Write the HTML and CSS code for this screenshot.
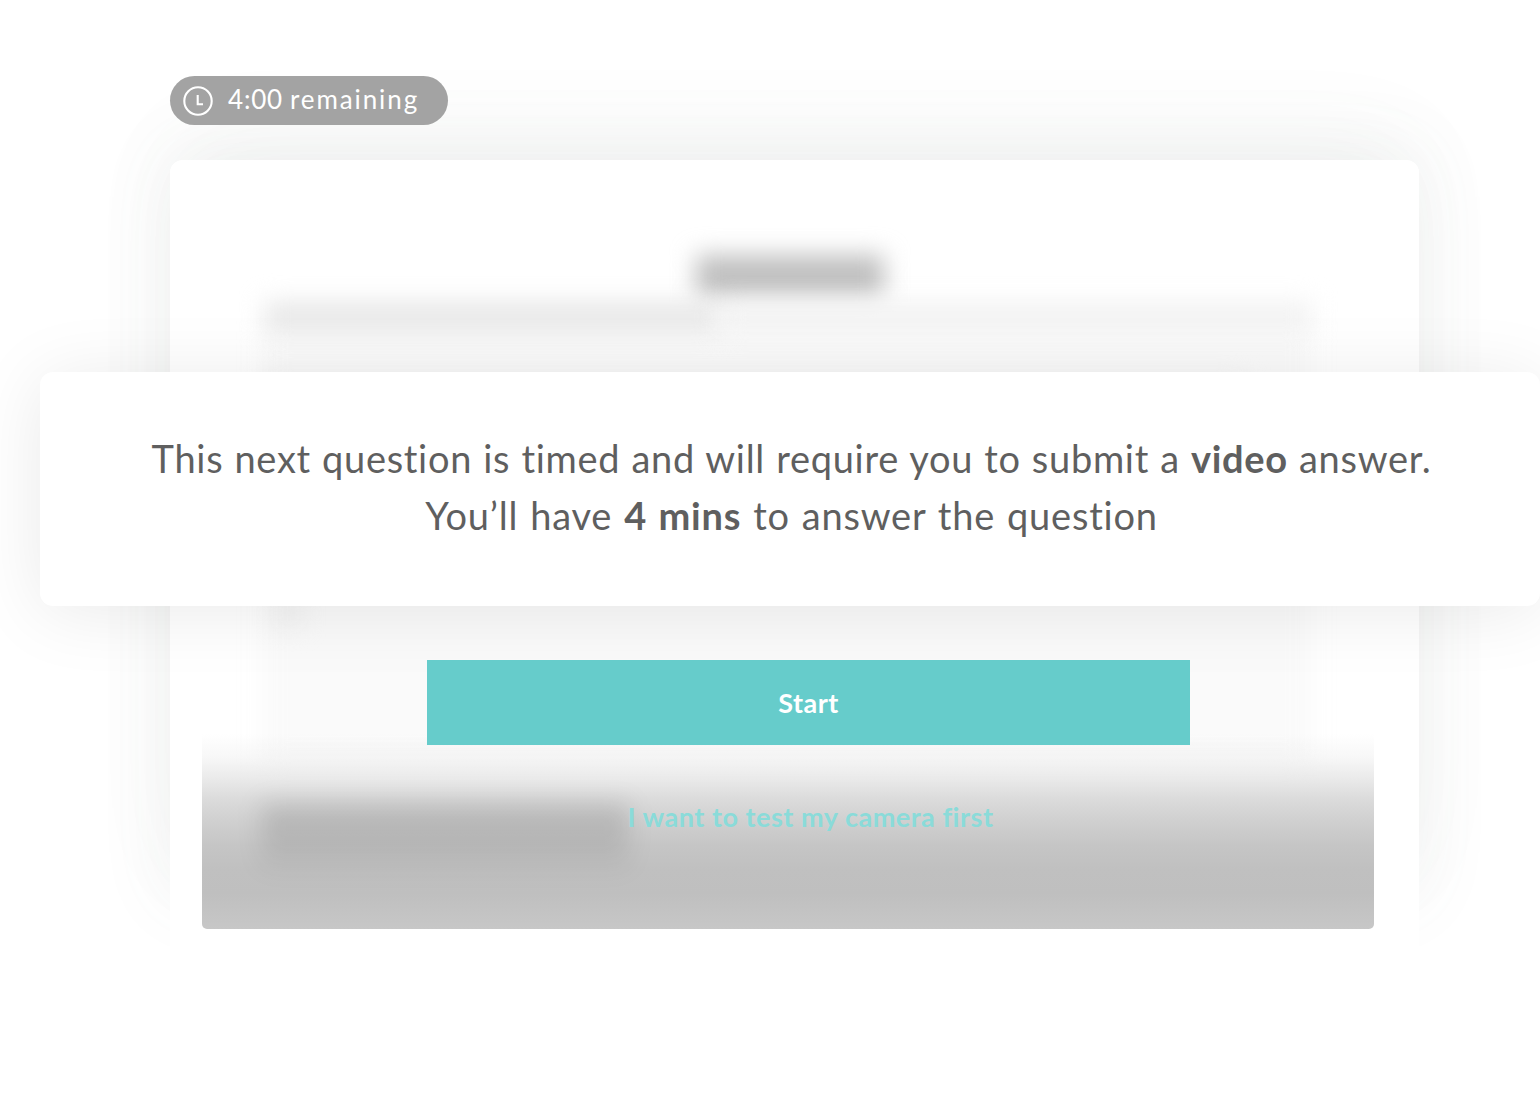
FILE: index.html
```html
<!DOCTYPE html>
<html lang="en">
<head>
<meta charset="utf-8">
<title>Timed question</title>
<link rel="stylesheet" href="styles.css">
</head>
<body>
<main class="stage">
  <div class="timer">
    <svg class="timer-icon" viewBox="0 0 32 32" aria-hidden="true">
      <circle cx="16" cy="16" r="13.7"/>
      <path d="M15.7 10v9.2h5.3"/>
    </svg>
    <span class="timer-text"><span class="timer-value">4:00</span> remaining</span>
  </div>
  <section class="card">
    <div class="preview" aria-hidden="true">
      <div class="blur blur-panel"></div>
      <div class="blur blur-title"></div>
      <div class="blur blur-line"></div>
      <div class="blur blur-line-end"></div>
      <div class="blur blur-copy"></div>
      <div class="blur blur-word"></div>
      <div class="shade"><div class="blur blur-label"></div></div>
    </div>
    <div class="dialog">
      <p class="line line-one">This next question is timed and will require you to submit a <strong>video</strong> answer.</p>
      <p class="line line-two">You’ll have <strong>4 mins</strong> to answer the question</p>
    </div>
    <button class="start"><span>Start</span></button>
    <a class="camera"><span>I want to test my camera first</span></a>
  </section>
</main>
</body>
</html>
```
FILE: styles.css
```css
* { box-sizing: border-box; }

body {
  margin: 0;
  background: #fff;
  font-family: Lato, "Open Sans", sans-serif;
  overflow: hidden;
}

.stage {
  width: 1540px;
  height: 1120px;
  padding: 76px 0 0 170px;
  overflow: hidden;
}

.timer {
  position: relative;
  z-index: 2;
  display: flex;
  align-items: center;
  gap: 14px;
  width: 278px;
  height: 49px;
  margin-bottom: 35px;
  padding-left: 12px;
  border-radius: 25px;
  background: #a3a3a3;
  color: #fff;
  font-size: 26px;
  letter-spacing: 1.9px;
  white-space: nowrap;
}

.timer-icon {
  width: 32px;
  height: 32px;
  fill: none;
  stroke: #fff;
  stroke-width: 2.1;
}

.timer-text {
  height: 49px;
  line-height: 47px;
  word-spacing: -1.5px;
}

.timer-value { letter-spacing: 0.8px; }

.card {
  position: relative;
  display: flex;
  flex-direction: column;
  width: 1249px;
  height: 835px;
  padding-top: 212px;
  border-radius: 13px;
  background: #fff;
}

.card::before {
  content: "";
  position: absolute;
  z-index: -1;
  inset: 0 0 90px;
  border-radius: 13px;
  box-shadow:
    0 -8px 76px rgba(100, 116, 110, 0.09),
    0 -30px 100px -10px rgba(100, 110, 106, 0.05);
}

.preview {
  position: absolute;
  inset: 0;
  overflow: hidden;
  border-radius: 13px;
}

.blur {
  position: absolute;
  filter: blur(12px);
}

.blur-panel { left: 92px; top: 172px; width: 1049px; height: 430px; background: #fafafa; }
.blur-title { left: 526px; top: 95px; width: 188px; height: 42px; background: #bfbfbf; }
.blur-line { left: 95px; top: 142px; width: 455px; height: 30px; background: #e7e7e7; }
.blur-line-end { left: 550px; top: 142px; width: 592px; height: 30px; background: #f2f2f2; }
.blur-copy { left: 95px; top: 218px; width: 980px; height: 100px; background: #f2f2f2; }
.blur-word { left: 108px; top: 440px; width: 22px; height: 26px; background: #efefef; }

.shade {
  position: absolute;
  left: 32px;
  top: 570px;
  width: 1172px;
  height: 199px;
  overflow: hidden;
  border-radius: 0 0 5px 5px;
  background: linear-gradient(
    rgba(191, 191, 191, 0) 2%,
    rgba(191, 191, 191, 0.12) 14%,
    rgba(191, 191, 191, 0.34) 25%,
    rgba(191, 191, 191, 0.57) 35%,
    rgba(191, 191, 191, 0.74) 46%,
    rgba(191, 191, 191, 0.9) 58%,
    #c0c0c0 70%,
    #bfbfbf 82%,
    #c7c7c7
  );
}

.blur-label {
  left: 60px;
  top: 74px;
  width: 366px;
  height: 66px;
  background: linear-gradient(rgba(0, 0, 0, 0.14), rgba(0, 0, 0, 0.08) 65%, rgba(0, 0, 0, 0.02));
}

.dialog {
  position: relative;
  width: 1500px;
  height: 234px;
  flex: none;
  margin-left: -130px;
  padding: 58px 0 0 3px;
  border-radius: 13px;
  background: #fff;
  box-shadow: 0 6px 72px rgba(0, 0, 0, 0.085);
  color: #5f5f5f;
  text-align: center;
}

.line {
  margin: 0;
  font-size: 38px;
  line-height: 57px;
  white-space: nowrap;
}

.line-one { letter-spacing: 0.7px; word-spacing: 0.75px; }
.line-two { letter-spacing: 0.8px; word-spacing: 1.4px; }

.start,
.camera {
  position: relative;
  width: 763px;
  margin-left: 257px;
  font-family: inherit;
  font-size: 27px;
  font-weight: 700;
  text-align: center;
  letter-spacing: 0.45px;
}

.start {
  height: 85px;
  margin-top: 54px;
  padding: 0;
  border: 0;
  background: #66cccb;
  color: #fff;
}

.camera {
  margin-top: 52px;
  padding-left: 4px;
  color: #8adbd9;
  line-height: 40px;
  letter-spacing: 0.52px;
  white-space: nowrap;
}
```
